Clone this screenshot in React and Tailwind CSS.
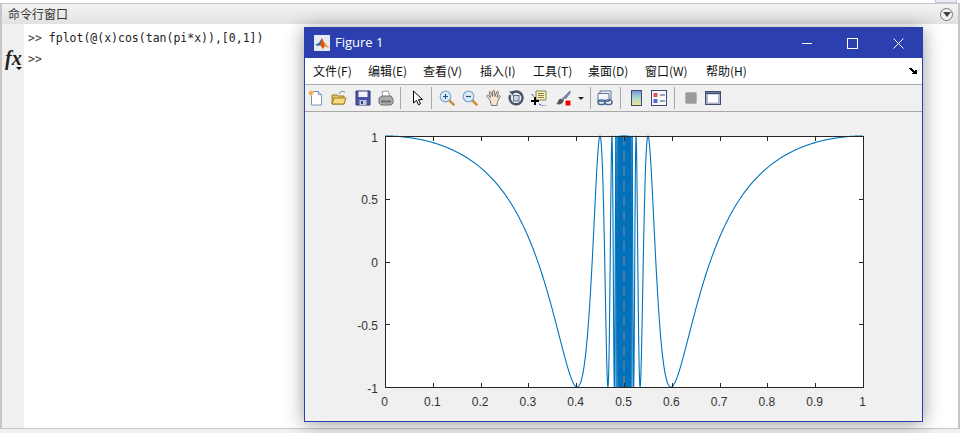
import React, { useMemo } from "react";

const menus = [
  ["文件(F)", "w-[55px]"],
  ["编辑(E)", "w-[55px]"],
  ["查看(V)", "w-[57px]"],
  ["插入(I)", "w-[53px]"],
  ["工具(T)", "w-[55px]"],
  ["桌面(D)", "w-[57px]"],
  ["窗口(W)", "w-[61px]"],
  ["帮助(H)", "w-[50px]"],
];

// plot box, same numbers as the figure window
const X0 = 385;
const X1 = 863;
const Y0 = 136;
const Y1 = 387;
const px = (x) => X0 + x * (X1 - X0);
const py = (y) => Y0 + ((1 - y) / 2) * (Y1 - Y0);

const buildCurve = () => {
  const pts = [];
  for (let x = 0; x < 0.35; x += 0.002) pts.push(x);
  for (let t = Math.tan(Math.PI * 0.35); t < 190; t += t < 8 ? 0.04 : 0.2) {
    pts.push(Math.atan(t) / Math.PI);
  }
  const left = pts.map((x) => [x, Math.cos(Math.tan(Math.PI * x))]);
  const right = left.map(([x, y]) => [1 - x, y]).reverse();
  return [...left, ...right]
    .map(([x, y], i) => `${i ? "L" : "M"}${px(x).toFixed(2)} ${py(y).toFixed(2)}`)
    .join("");
};

const Icon = ({ children, className = "" }) => (
  <svg viewBox="0 0 16 16" className={`h-4 w-4 shrink-0 ${className}`}>
    {children}
  </svg>
);

const Sep = ({ className = "" }) => <div className={`h-[22px] w-px bg-[#a8a8a8] ${className}`} />;

const Lens = ({ sign }) => (
  <>
    <path d="M10 10l4.6 4.6" stroke="#d0922e" strokeWidth="2.6" strokeLinecap="round" />
    <circle cx="6.5" cy="6.5" r="5.3" fill="#dcecf8" stroke="#7fa9cc" strokeWidth="1.2" />
    <path d={sign === "+" ? "M4 6.5h5M6.5 4v5" : "M4 6.5h5"} stroke="#2a4f90" strokeWidth="1.2" />
  </>
);

const Toolbar = () => (
  <div className="flex h-[26px] items-center bg-[#f0f0f0] pl-[3px]">
    {/* new */}
    <Icon>
      <path d="M3.5 1.5h7l3 3v10.5h-10z" fill="#fff" stroke="#7c93b8" />
      <path d="M10.5 1.5v3h3" fill="#dfe8f4" stroke="#7c93b8" />
      <circle cx="3" cy="3" r="2.2" fill="#f3a33c" stroke="#e8cf9c" />
    </Icon>
    {/* open */}
    <Icon className="ml-[7px]">
      <path d="M8 4c1-3 4-3 6-2" fill="none" stroke="#6e7f96" />
      <path d="M1 5h5l1 1h6v8H1z" fill="#e7c25a" stroke="#9c7d25" />
      <path d="M1 14l2-6h12l-2 6z" fill="#f5dc82" stroke="#9c7d25" />
    </Icon>
    {/* save */}
    <Icon className="ml-[8px]">
      <path d="M1 1h14v14H1z" fill="#4a55a8" stroke="#2c3473" />
      <path d="M3.5 1.5h9v5.5h-9z" fill="#f2f2f8" />
      <path d="M4.5 10h7v5h-7z" fill="#c4c8d8" />
      <path d="M6 11h2v3H6z" fill="#3a4288" />
    </Icon>
    {/* print */}
    <Icon className="ml-[7px]">
      <path d="M4 1.5l6-.5 2 6H5z" fill="#fff" stroke="#9aa0a6" />
      <path d="M1 8l3-2h9l2 3v4l-2 2H3l-2-2z" fill="#a9acaf" stroke="#6e7174" />
      <path d="M3 10.5h10v2H3z" fill="#6c6f72" />
    </Icon>
    <Sep className="ml-[6px]" />
    {/* pointer */}
    <Icon className="ml-[9px]">
      <path d="M3.5 1v12l3-2.6 2 4.4 2-1-2-4.2h4z" fill="#fff" stroke="#000" strokeWidth="1" strokeLinejoin="miter" />
    </Icon>
    <Sep className="ml-[5px]" />
    <Icon className="ml-[7px]">
      <Lens sign="+" />
    </Icon>
    <Icon className="ml-[7px]">
      <Lens sign="-" />
    </Icon>
    {/* hand */}
    <Icon className="ml-[8px]">
      <path
        d="M4 10L1 6.500c-.6-1 .6-1.800 1.400-1L4.500 7.500 3.200 2.600c-.2-1.200 1.300-1.400 1.600-.4L6.500 6.500 6.800 1c.1-1 1.500-1 1.600 0L9 6.500 10.800 1.800c.3-1 1.700-.7 1.500.4L11 7.500l1.800-1.600c.8-.8 1.900 0 1.300 1L11.500 11.500l-.5 4H5.500z"
        fill="#fbe3cf"
        stroke="#5b5b5b"
        strokeWidth="0.8"
      />
    </Icon>
    {/* rotate */}
    <Icon className="ml-[6px]">
      <path d="M4 3a6.400 6.400 0 1 1-1.600 2" fill="none" stroke="#47536b" strokeWidth="2.400" />
      <path d="M1 1.500l5-.5-1 4.500z" fill="#47536b" />
      <rect x="5.500" y="5.500" width="5.500" height="5.500" fill="#c5d6e8" stroke="#47536b" strokeWidth="0.8" />
    </Icon>
    {/* data cursor */}
    <Icon className="ml-[7px]">
      <path d="M5 1h10v9H5z" fill="#f6efb0" stroke="#8a8450" />
      <path d="M7 3.500h6M7 5.500h6M7 7.500h6" stroke="#8a8450" />
      <path d="M0 11h8M4 7v8" stroke="#000" strokeWidth="2" />
      <path d="M1 4l2 3M8 14l4 2h3" fill="none" stroke="#2222dd" strokeDasharray="2 1" />
    </Icon>
    {/* brush */}
    <Icon className="ml-[8px]">
      <path d="M15 1L7 9l2 2 6-8z" fill="#7e90b8" stroke="#4c5b80" strokeWidth="0.7" />
      <path d="M1 14c2 0 1.500-5 5-5.500l2.500 2.500C8 14 4 15 1 14z" fill="#57534e" />
      <rect x="9" y="9" width="7" height="7" fill="#fff" />
      <rect x="10.500" y="10.500" width="5" height="5" fill="#ee0000" />
    </Icon>
    <div className="ml-[7px] h-0 w-0 border-x-[3px] border-t-[3px] border-x-transparent border-t-[#222]" />
    <Sep className="ml-[6px]" />
    {/* link */}
    <Icon className="ml-[6px]">
      <path d="M3 1h11v8H3z" fill="#eef2f8" stroke="#5c7396" />
      <path d="M1 3.500h11v8H1z" fill="#f6f8fb" stroke="#5c7396" />
      <rect x="1" y="10" width="7" height="4.400" rx="2.200" fill="none" stroke="#4a6a92" strokeWidth="1.500" />
      <rect x="8" y="10" width="7" height="4.400" rx="2.200" fill="none" stroke="#4a6a92" strokeWidth="1.500" />
    </Icon>
    <Sep className="ml-[7px]" />
    {/* colorbar */}
    <svg viewBox="0 0 11 16" className="ml-[10px] h-4 w-[11px] shrink-0">
      <defs>
        <linearGradient id="cbar" x1="0" y1="0" x2="0" y2="1">
          <stop offset="0" stopColor="#7a8fd8" />
          <stop offset="0.5" stopColor="#a9dcd0" />
          <stop offset="1" stopColor="#f4e48a" />
        </linearGradient>
      </defs>
      <rect x="0.5" y="0.5" width="10" height="15" fill="url(#cbar)" stroke="#3f4a70" />
    </svg>
    {/* legend */}
    <Icon className="ml-[9px]">
      <rect x="0.5" y="0.5" width="15" height="15" fill="#f7f8fb" stroke="#3f4a70" />
      <rect x="2.500" y="3" width="4" height="4" fill="#e0555c" />
      <rect x="2.500" y="9" width="4" height="4" fill="#5a62d0" />
      <path d="M9 5h5M9 11h5" stroke="#3f4a70" />
    </Icon>
    <Sep className="ml-[7px]" />
    {/* plot tools, greyed */}
    <svg viewBox="0 0 12 12" className="ml-[10px] h-3 w-3 shrink-0">
      <rect x="0.5" y="0.5" width="11" height="11" rx="1" fill="#9a9a9a" stroke="#b5b5b5" />
    </svg>
    <Icon className="ml-[8px]">
      <rect x="0.5" y="1.500" width="15" height="13" fill="#a9b4c8" stroke="#3f4a70" />
      <rect x="3" y="4.500" width="10" height="8" fill="#fff" />
      <path d="M1 2.500h14v1.500H1z" fill="#3f4a70" />
    </Icon>
  </div>
);

const Axes = () => {
  const curve = useMemo(buildCurve, []);
  const xTicks = [0, 0.1, 0.2, 0.3, 0.4, 0.5, 0.6, 0.7, 0.8, 0.9, 1];
  const yTicks = [1, 0.5, 0, -0.5, -1];
  return (
    <svg viewBox="305 112 617 309" className="block h-[309px] w-[617px]">
      <rect x={X0} y={Y0} width={X1 - X0} height={Y1 - Y0} fill="#fff" />
      {/* the oscillation is too dense to resolve near 0.5, it reads as a band */}
      <rect x={615} y={Y0} width={18} height={Y1 - Y0} fill="#0072BD" opacity="0.55" />
      <rect x={618} y={Y0} width={13} height={Y1 - Y0} fill="#0072BD" />
      <path d={curve} fill="none" stroke="#0072BD" strokeWidth="1.1" strokeLinejoin="round" />
      <path d={`M${px(0.5)} ${Y0}V${Y1}`} stroke="#a08572" strokeWidth="1" strokeDasharray="10 5" />
      <rect x={X0 + 0.5} y={Y0 + 0.5} width={X1 - X0} height={Y1 - Y0} fill="none" stroke="#262626" />
      {xTicks.map((t) => (
        <g key={t}>
          <path
            d={`M${Math.round(px(t)) + 0.5} ${Y0}v5M${Math.round(px(t)) + 0.5} ${Y1 + 1}v-5`}
            stroke="#262626"
          />
          <text x={px(t) - 0.5} y={405.5} textAnchor="middle" fontSize="12" fill="#333" fontFamily="'Liberation Sans', sans-serif">
            {t}
          </text>
        </g>
      ))}
      {yTicks.map((t) => (
        <g key={t}>
          <path
            d={`M${X0} ${Math.round(py(t)) + 0.5}h5M${X1 + 1} ${Math.round(py(t)) + 0.5}h-5`}
            stroke="#262626"
          />
          <text x={378} y={py(t) + 5.5} textAnchor="end" fontSize="12" fill="#333" fontFamily="'Liberation Sans', sans-serif">
            {t}
          </text>
        </g>
      ))}
    </svg>
  );
};

const FigureWindow = () => (
  <div className="absolute left-[304px] top-[27px] flex h-[395px] w-[619px] flex-col border border-[#2b40ae] bg-[#f0f0f0] shadow-[0_2px_18px_rgba(0,0,0,0.4)]">
    {/* title bar */}
    <div className="flex h-[30px] shrink-0 items-center bg-[#2b40ae] pl-[9px] text-white">
      <svg viewBox="0 0 16 16" className="h-4 w-4 shrink-0">
        <rect width="16" height="16" fill="#e6e9f2" />
        <path d="M1 10l4-2 3-5 2 4 5 6-4-2-2 3-3-4z" fill="#d95319" />
        <path d="M1 10l4-2 3-5-2 7-1 1z" fill="#2d6fb5" />
        <path d="M8 3l2 4 5 6-4-2z" fill="#edb120" />
      </svg>
      <span className="ml-[5px] font-['Open_Sans',sans-serif] text-[13px]">Figure 1</span>
      <div className="ml-auto flex items-center">
        <div className="h-px w-[10px] bg-white" />
        <div className="ml-[35px] h-[11px] w-[11px] border border-white" />
        <svg viewBox="0 0 11 11" className="ml-[35px] mr-[18px] h-[11px] w-[11px]">
          <path d="M0.5 0.5l10 10M10.500 0.5l-10 10" stroke="#fff" />
        </svg>
      </div>
    </div>
    {/* menu bar */}
    <div className="flex h-[27px] shrink-0 items-center border-b border-[#a8a8a8] bg-white pl-[8px] font-['Noto_Sans_CJK_SC',sans-serif] text-[12px] text-[#111]">
      {menus.map(([m, w]) => (
        <span key={m} className={w}>
          {m}
        </span>
      ))}
      <svg viewBox="0 0 8 6" className="ml-auto mr-[5px] h-[6px] w-2">
        <path d="M0 0h3v1h1v1h1v1h1V2h2v4H3V5h1V4H3V3H2V2H1V1H0z" fill="#000" />
      </svg>
    </div>
    <Toolbar />
    <div className="h-px shrink-0 bg-[#a8a8a8]" />
    <Axes />
  </div>
);

export default function App() {
  return (
    <div className="relative flex h-[433px] w-[960px] flex-col overflow-hidden bg-white">
      {/* strip above the panel */}
      <div className="relative h-[3px] shrink-0 bg-white">
        <div className="absolute right-[3px] top-0 h-[3px] w-[22px] border-x border-b border-[#c4c8d4] bg-[#e8ecf6]" />
      </div>
      {/* command window panel */}
      <div className="flex min-h-0 flex-1 flex-col border-x-2 border-y border-[#c6c6c6]">
        <div className="flex h-[20px] shrink-0 items-center justify-between bg-gradient-to-b from-[#f3f3f3] to-[#e2e2e2] pl-[6px] pr-[5px]">
          <span className="font-['Noto_Sans_CJK_SC',sans-serif] text-[12px] leading-none text-[#333]">命令行窗口</span>
          <div className="flex h-[13px] w-[13px] items-center justify-center rounded-full border border-[#777] bg-[#f4f4f4]">
            <div className="h-0 w-0 border-x-[4px] border-t-[5px] border-x-transparent border-t-[#444]" />
          </div>
        </div>
        <div className="flex min-h-0 flex-1">
          <div className="relative z-10 w-[22px] shrink-0 bg-[#f0f0f0]">
            <span className="absolute left-[3px] top-[24px] font-['Liberation_Serif',serif] text-[20px] font-bold italic leading-none text-[#222]">
              fx
            </span>
            <div className="absolute left-[14px] top-[43px] h-0 w-0 border-x-[3px] border-t-[3px] border-x-transparent border-t-[#111]" />
          </div>
          <div className="flex-1 bg-white pl-[4px] pt-[4px] font-['DejaVu_Sans_Mono',monospace] text-[11.5px] leading-[20.5px] text-[#222]">
            <div>
              <span className="text-[#444]">&gt;&gt;</span> fplot(@(x)cos(tan(pi*x)),[0,1])
            </div>
            <div className="text-[#444]">&gt;&gt;</div>
          </div>
        </div>
      </div>
      <div className="h-[4px] shrink-0 bg-[#f0f0f0]" />
      <FigureWindow />
    </div>
  );
}
